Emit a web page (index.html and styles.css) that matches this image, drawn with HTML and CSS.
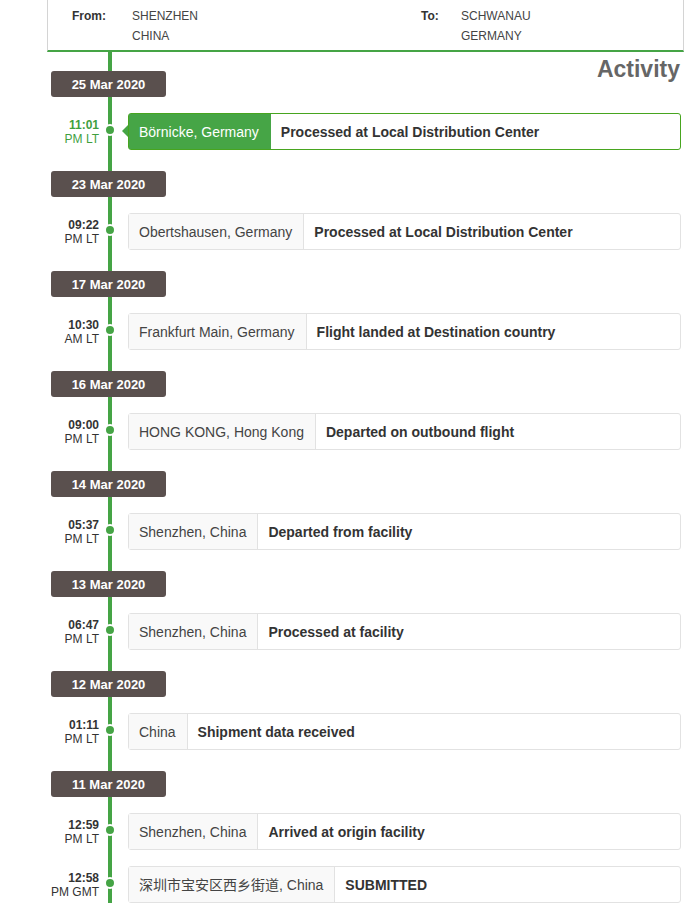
FILE: index.html
```html
<!DOCTYPE html>
<html lang="en">
<head>
    <meta charset="UTF-8">
    <meta name="viewport" content="width=device-width, initial-scale=1.0">
    <title>Shipment Tracking</title>
    <link rel="stylesheet" href="styles.css">
</head>
<body>
    <div class="route">
        <div class="route-part from">
            <span class="route-label">From:</span>
            <span class="route-value">SHENZHEN<br>CHINA</span>
        </div>
        <div class="route-part to">
            <span class="route-label">To:</span>
            <span class="route-value">SCHWANAU<br>GERMANY</span>
        </div>
    </div>

    <div class="timeline">
        <h2 class="activity-title">Activity</h2>

        <div class="day">
            <div class="day-badge">25 Mar 2020</div>
            <div class="event active">
                <div class="event-time"><b>11:01</b>PM LT</div>
                <div class="event-dot-col"><span class="event-dot"></span></div>
                <div class="event-card">
                    <div class="event-place">Börnicke, Germany</div>
                    <div class="event-desc">Processed at Local Distribution Center</div>
                </div>
            </div>
        </div>

        <div class="day">
            <div class="day-badge">23 Mar 2020</div>
            <div class="event">
                <div class="event-time"><b>09:22</b>PM LT</div>
                <div class="event-dot-col"><span class="event-dot"></span></div>
                <div class="event-card">
                    <div class="event-place">Obertshausen, Germany</div>
                    <div class="event-desc">Processed at Local Distribution Center</div>
                </div>
            </div>
        </div>

        <div class="day">
            <div class="day-badge">17 Mar 2020</div>
            <div class="event">
                <div class="event-time"><b>10:30</b>AM LT</div>
                <div class="event-dot-col"><span class="event-dot"></span></div>
                <div class="event-card">
                    <div class="event-place">Frankfurt Main, Germany</div>
                    <div class="event-desc">Flight landed at Destination country</div>
                </div>
            </div>
        </div>

        <div class="day">
            <div class="day-badge">16 Mar 2020</div>
            <div class="event">
                <div class="event-time"><b>09:00</b>PM LT</div>
                <div class="event-dot-col"><span class="event-dot"></span></div>
                <div class="event-card">
                    <div class="event-place">HONG KONG, Hong Kong</div>
                    <div class="event-desc">Departed on outbound flight</div>
                </div>
            </div>
        </div>

        <div class="day">
            <div class="day-badge">14 Mar 2020</div>
            <div class="event">
                <div class="event-time"><b>05:37</b>PM LT</div>
                <div class="event-dot-col"><span class="event-dot"></span></div>
                <div class="event-card">
                    <div class="event-place">Shenzhen, China</div>
                    <div class="event-desc">Departed from facility</div>
                </div>
            </div>
        </div>

        <div class="day">
            <div class="day-badge">13 Mar 2020</div>
            <div class="event">
                <div class="event-time"><b>06:47</b>PM LT</div>
                <div class="event-dot-col"><span class="event-dot"></span></div>
                <div class="event-card">
                    <div class="event-place">Shenzhen, China</div>
                    <div class="event-desc">Processed at facility</div>
                </div>
            </div>
        </div>

        <div class="day">
            <div class="day-badge">12 Mar 2020</div>
            <div class="event">
                <div class="event-time"><b>01:11</b>PM LT</div>
                <div class="event-dot-col"><span class="event-dot"></span></div>
                <div class="event-card">
                    <div class="event-place">China</div>
                    <div class="event-desc">Shipment data received</div>
                </div>
            </div>
        </div>

        <div class="day">
            <div class="day-badge">11 Mar 2020</div>
            <div class="event">
                <div class="event-time"><b>12:59</b>PM LT</div>
                <div class="event-dot-col"><span class="event-dot"></span></div>
                <div class="event-card">
                    <div class="event-place">Shenzhen, China</div>
                    <div class="event-desc">Arrived at origin facility</div>
                </div>
            </div>
            <div class="event">
                <div class="event-time"><b>12:58</b>PM GMT</div>
                <div class="event-dot-col"><span class="event-dot"></span></div>
                <div class="event-card">
                    <div class="event-place">深圳市宝安区西乡街道, China</div>
                    <div class="event-desc upper">SUBMITTED</div>
                </div>
            </div>
        </div>
    </div>
</body>
</html>
```

FILE: styles.css
```css
body {
    font-family: 'Liberation Sans', Arial, 'Noto Sans CJK SC', sans-serif;
    margin: 0;
    padding: 0;
    background: #fff;
    color: #333;
    overflow: hidden;
}
.route {
    display: flex;
    margin-left: 47px;
    width: 635px;
    padding: 6px 0 4px 0;
    border-left: 1px solid #d4d4d4;
    border-right: 1px solid #d4d4d4;
    border-bottom: 2px solid #45a445;
    font-size: 12px;
    line-height: 20px;
}
.route-part {
    display: flex;
}
.route-part.from {
    width: 349px;
    padding-left: 24px;
}
.route-label {
    font-weight: bold;
    color: #333;
}
.from .route-label {
    width: 60px;
}
.to .route-label {
    width: 40px;
}
.route-value {
    color: #444;
}
.timeline {
    position: relative;
    padding-top: 19px;
}
.timeline::before {
    content: "";
    position: absolute;
    top: 0;
    bottom: 0;
    left: 108px;
    width: 4px;
    background: #45a445;
}
.activity-title {
    float: right;
    margin: -16px 20px 0 0;
    font-size: 23px;
    line-height: 28px;
    font-weight: bold;
    color: #666;
}
.day {
    margin-bottom: 21px;
}
.day-badge {
    position: relative;
    margin-left: 51px;
    width: 115px;
    height: 26px;
    line-height: 28px;
    border-radius: 3px;
    background: #5a504e;
    color: #fff;
    font-size: 13px;
    font-weight: bold;
    text-align: center;
}
.event {
    display: flex;
    align-items: center;
    margin-top: 16px;
}
.event-time {
    margin-left: 40px;
    width: 59px;
    text-align: right;
    font-size: 12px;
    line-height: 14px;
    color: #333;
}
.event-time b {
    display: block;
}
.event-dot-col {
    position: relative;
    width: 22px;
    display: flex;
    justify-content: center;
    margin-top: -3px;
}
.event-dot {
    width: 8px;
    height: 8px;
    border-radius: 50%;
    background: #45a445;
    border: 2px solid #fff;
}
.event-card {
    position: relative;
    display: flex;
    margin-left: 7px;
    width: 551px;
    height: 35px;
    line-height: 37px;
    border: 1px solid #e2e2e2;
    border-radius: 3px;
    font-size: 14px;
}
.event-place {
    padding: 0 11px 0 10px;
    background: #f9f9f9;
    border-right: 1px solid #e2e2e2;
    color: #444;
    white-space: nowrap;
}
.event-desc {
    padding-left: 10px;
    font-weight: bold;
    color: #333;
}
.active .event-time {
    color: #3f9f3f;
}
.active .event-card {
    border-color: #47a51f;
}
.active .event-place {
    background: #46a546;
    border-right-color: #46a546;
    color: #fff;
}
.active .event-card::before {
    content: "";
    position: absolute;
    left: -7px;
    top: 11px;
    border-top: 6px solid transparent;
    border-bottom: 6px solid transparent;
    border-right: 6px solid #46a546;
}
```
